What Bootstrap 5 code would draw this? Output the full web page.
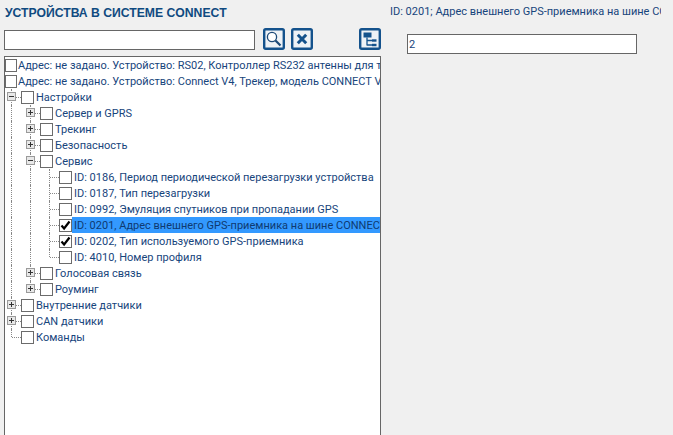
<!DOCTYPE html>
<html>
<head>
  <meta charset="utf-8">
  <title>Устройства в системе Connect</title>
  <link href="https://cdn.jsdelivr.net/npm/bootstrap@5.3.1/dist/css/bootstrap.min.css" rel="stylesheet">
  <style>
    html, body { height: 100%; overflow: hidden; }
    body { background: #f0f0f0; color: #17457c; font-family: Roboto, "Liberation Sans", sans-serif; font-size: 11px; }
    .left-pane { width: 381px; padding-left: 4px; }
    .right-pane { padding-left: 9px; width: 280px; }
    .pane-title { font-family: "Liberation Sans", sans-serif; font-size: 12.2px; font-weight: 700; color: #0f4a80; margin: 0; padding: 6px 0 0 1px; height: 28px; line-height: 15px; }
    .search-row { height: 22px; margin-bottom: 6px; }
    .flat-input { border: 1px solid #666; border-radius: 0; background: #fff; color: #17457c; font-size: 11px; padding: 0 1px; height: 20px; min-height: 0; }
    .search-input { width: 251px; margin-top: 2px; }
    .tool-btn { width: 22px; height: 22px; padding: 0; border: 0; border-radius: 2px; line-height: 0; display: block; }
    .tool-btn svg { display: block; }
    .tool-gap { margin-left: 6px; }
    .tree-box { border: 1px solid #666; border-bottom: 0; background: #fff; overflow: hidden; flex: 1 1 auto; width: 377px; }
    .tree-row { height: 16px; white-space: nowrap; line-height: 16px; }
    .tree-row > .guide:first-child { margin-left: -3px; }
    .guide { width: 19px; height: 16px; flex: none; position: relative; }
    .guide.line::before { content: ""; position: absolute; left: 9px; top: 0; bottom: 0; border-left: 1px dotted #888; }
    .guide.half::before { content: ""; position: absolute; left: 9px; top: 0; height: 8px; border-left: 1px dotted #888; }
    .guide.tick::after { content: ""; position: absolute; left: 10px; right: 0; top: 8px; border-top: 1px dotted #888; }
    .expander { position: absolute; left: 5px; top: 3px; width: 9px; height: 9px; border: 1px solid #9a9a9a; background: #e8e8e8; z-index: 1; }
    .expander::before { content: ""; position: absolute; left: 1px; right: 1px; top: 3px; height: 1px; background: #333; }
    .expander.plus::after { content: ""; position: absolute; top: 1px; bottom: 1px; left: 3px; width: 1px; background: #333; }
    .tree-check.form-check-input { width: 13px; height: 13px; margin: 0 2px 0 0; flex: none; border: 1px solid #6b6b6b; border-radius: 0; background-color: #fff; box-shadow: none; }
    .tree-check.form-check-input:checked { background-color: #fff; border-color: #6b6b6b; background-size: 13px 13px; background-image: url("data:image/svg+xml,%3csvg xmlns='http://www.w3.org/2000/svg' viewBox='0 0 13 13'%3e%3cpath fill='none' stroke='%23000' stroke-width='2.2' d='M2.5 6.5l2.6 3L10.5 2.5'/%3e%3c/svg%3e"); }
    .root-check.form-check-input { width: 12px; margin-right: 1px; }
    .tree-label { height: 16px; padding-top: 1px; line-height: 15px; }
    .tree-label.picked { background: #3399ff; color: #0f3a70; flex: 1 1 auto; overflow: hidden; margin-left: -2px; padding-left: 2px; }
    .detail-title { height: 34px; padding-top: 4px; line-height: 16px; white-space: nowrap; overflow: hidden; }
    .detail-input { width: 230px; margin-left: 17px; padding-left: 1px; }
  </style>
</head>
<body class="m-0">
  <div class="d-flex h-100">
    <div class="left-pane d-flex flex-column h-100">
      <h6 class="pane-title">УСТРОЙСТВА В СИСТЕМЕ CONNECT</h6>
      <div class="search-row d-flex">
        <input class="form-control flat-input search-input" type="text">
        <button class="btn tool-btn ms-2" type="button" aria-label="Найти">
          <svg width="22" height="22" viewBox="0 0 22 22"><rect x="1.2" y="1.2" width="19.6" height="19.6" rx="1.5" fill="#eef2f6" stroke="#14528c" stroke-width="2.4"/><circle cx="9" cy="9" r="4.6" fill="#fff" stroke="#1d4a78" stroke-width="1.3"/><path d="M12.5 12.5l5 5" stroke="#1d4a78" stroke-width="2.2"/></svg>
        </button>
        <button class="btn tool-btn tool-gap" type="button" aria-label="Очистить">
          <svg width="22" height="22" viewBox="0 0 22 22"><rect x="1.2" y="1.2" width="19.6" height="19.6" rx="1.5" fill="#eef2f6" stroke="#14528c" stroke-width="2.4"/><path d="M6.8 6.8l8.4 8.4M15.2 6.8l-8.4 8.4" stroke="#14528c" stroke-width="3"/></svg>
        </button>
        <button class="btn tool-btn ms-auto" type="button" aria-label="Дерево">
          <svg width="22" height="22" viewBox="0 0 22 22"><rect x="1.2" y="1.2" width="19.6" height="19.6" rx="1.5" fill="#eef2f6" stroke="#14528c" stroke-width="2.4"/><rect x="4.5" y="4.5" width="8" height="5" fill="#14528c"/><path d="M8 9.5v8M8 12.5h5M8 17h5" fill="none" stroke="#14528c" stroke-width="1.3"/><rect x="13" y="11.3" width="4.5" height="2.4" fill="#14528c"/><rect x="13" y="15.8" width="4.5" height="2.4" fill="#14528c"/></svg>
        </button>
      </div>
      <div class="tree-box">
        <div class="tree-row d-flex align-items-center"><input class="form-check-input tree-check root-check" type="checkbox"><span class="tree-label">Адрес: не задано. Устройство: RS02, Контроллер RS232 антенны для трекера</span></div>
        <div class="tree-row d-flex align-items-center"><input class="form-check-input tree-check root-check" type="checkbox"><span class="tree-label">Адрес: не задано. Устройство: Connect V4, Трекер, модель CONNECT V4</span></div>

        <div class="tree-row d-flex align-items-center"><span class="guide line tick"><span class="expander"></span></span><input class="form-check-input tree-check" type="checkbox"><span class="tree-label">Настройки</span></div>
        <div class="tree-row d-flex align-items-center"><span class="guide line"></span><span class="guide line tick"><span class="expander plus"></span></span><input class="form-check-input tree-check" type="checkbox"><span class="tree-label">Сервер и GPRS</span></div>
        <div class="tree-row d-flex align-items-center"><span class="guide line"></span><span class="guide line tick"><span class="expander plus"></span></span><input class="form-check-input tree-check" type="checkbox"><span class="tree-label">Трекинг</span></div>
        <div class="tree-row d-flex align-items-center"><span class="guide line"></span><span class="guide line tick"><span class="expander plus"></span></span><input class="form-check-input tree-check" type="checkbox"><span class="tree-label">Безопасность</span></div>
        <div class="tree-row d-flex align-items-center"><span class="guide line"></span><span class="guide line tick"><span class="expander"></span></span><input class="form-check-input tree-check" type="checkbox"><span class="tree-label">Сервис</span></div>
        <div class="tree-row d-flex align-items-center"><span class="guide line"></span><span class="guide line"></span><span class="guide line tick"></span><input class="form-check-input tree-check" type="checkbox"><span class="tree-label">ID: 0186, Период периодической перезагрузки устройства</span></div>
        <div class="tree-row d-flex align-items-center"><span class="guide line"></span><span class="guide line"></span><span class="guide line tick"></span><input class="form-check-input tree-check" type="checkbox"><span class="tree-label">ID: 0187, Тип перезагрузки</span></div>
        <div class="tree-row d-flex align-items-center"><span class="guide line"></span><span class="guide line"></span><span class="guide line tick"></span><input class="form-check-input tree-check" type="checkbox"><span class="tree-label">ID: 0992, Эмуляция спутников при пропадании GPS</span></div>
        <div class="tree-row d-flex align-items-center"><span class="guide line"></span><span class="guide line"></span><span class="guide line tick"></span><input class="form-check-input tree-check" type="checkbox" checked><span class="tree-label picked">ID: 0201, Адрес внешнего GPS-приемника на шине CONNECT</span></div>
        <div class="tree-row d-flex align-items-center"><span class="guide line"></span><span class="guide line"></span><span class="guide line tick"></span><input class="form-check-input tree-check" type="checkbox" checked><span class="tree-label">ID: 0202, Тип используемого GPS-приемника</span></div>
        <div class="tree-row d-flex align-items-center"><span class="guide line"></span><span class="guide line"></span><span class="guide half tick"></span><input class="form-check-input tree-check" type="checkbox"><span class="tree-label">ID: 4010, Номер профиля</span></div>
        <div class="tree-row d-flex align-items-center"><span class="guide line"></span><span class="guide line tick"><span class="expander plus"></span></span><input class="form-check-input tree-check" type="checkbox"><span class="tree-label">Голосовая связь</span></div>
        <div class="tree-row d-flex align-items-center"><span class="guide line"></span><span class="guide half tick"><span class="expander plus"></span></span><input class="form-check-input tree-check" type="checkbox"><span class="tree-label">Роуминг</span></div>
        <div class="tree-row d-flex align-items-center"><span class="guide line tick"><span class="expander plus"></span></span><input class="form-check-input tree-check" type="checkbox"><span class="tree-label">Внутренние датчики</span></div>
        <div class="tree-row d-flex align-items-center"><span class="guide line tick"><span class="expander plus"></span></span><input class="form-check-input tree-check" type="checkbox"><span class="tree-label">CAN датчики</span></div>
        <div class="tree-row d-flex align-items-center"><span class="guide half tick"></span><input class="form-check-input tree-check" type="checkbox"><span class="tree-label">Команды</span></div>
      </div>
    </div>
    <div class="right-pane">
      <div class="detail-title">ID: 0201; Адрес внешнего GPS-приемника на шине CONNECT</div>
      <input class="form-control flat-input detail-input" type="text" value="2">
    </div>
  </div>
</body>
</html>
